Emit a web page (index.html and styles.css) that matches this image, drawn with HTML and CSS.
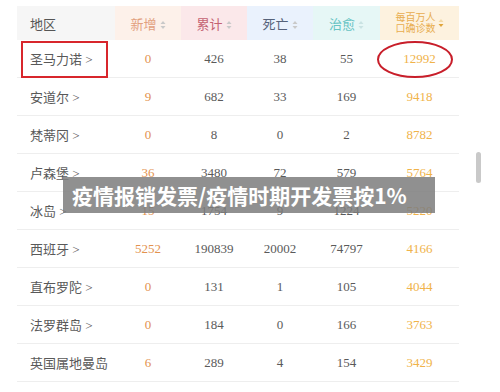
FILE: index.html
```html
<!DOCTYPE html>
<html lang="zh-CN">
<head>
<meta charset="utf-8">
<link rel="stylesheet" href="styles.css">
</head>
<body>
<div class="page">
  <table class="data">
    <colgroup>
      <col class="c-area"><col class="c-num"><col class="c-num"><col class="c-num"><col class="c-num2"><col class="c-last">
    </colgroup>
    <thead>
      <tr>
        <th class="h-area">地区</th>
        <th class="h-new">新增<svg class="sort" width="6" height="10" viewBox="0 0 6 10"><path d="M3 1 L5.5 4 L0.5 4Z" fill="#c9c9c9"/><path d="M3 9 L5.5 6 L0.5 6Z" fill="#c9c9c9"/></svg></th>
        <th class="h-total">累计<svg class="sort" width="6" height="10" viewBox="0 0 6 10"><path d="M3 1 L5.5 4 L0.5 4Z" fill="#c9c9c9"/><path d="M3 9 L5.5 6 L0.5 6Z" fill="#c9c9c9"/></svg></th>
        <th class="h-dead">死亡<svg class="sort" width="6" height="10" viewBox="0 0 6 10"><path d="M3 1 L5.5 4 L0.5 4Z" fill="#c9c9c9"/><path d="M3 9 L5.5 6 L0.5 6Z" fill="#c9c9c9"/></svg></th>
        <th class="h-cure">治愈<svg class="sort" width="6" height="10" viewBox="0 0 6 10"><path d="M3 1 L5.5 4 L0.5 4Z" fill="#c9e3e3"/><path d="M3 9 L5.5 6 L0.5 6Z" fill="#c9e3e3"/></svg></th>
        <th class="h-last"><span class="two">每百万人<br>口确诊数</span><svg class="sort" width="6" height="10" viewBox="0 0 6 10"><path d="M3 1 L5.5 4 L0.5 4Z" fill="#f3d9a6"/><path d="M3 9 L5.5 6 L0.5 6Z" fill="#e0a53a"/></svg></th>
      </tr>
    </thead>
    <tbody>
      <tr><td class="area"><span class="mark-box"></span>圣马力诺 &gt;</td><td class="new">0</td><td>426</td><td>38</td><td>55</td><td class="last"><svg class="mark-ring" width="80" height="40" viewBox="0 0 80 40"><ellipse cx="38" cy="19.5" rx="37" ry="17.5" fill="none" stroke="#c81e2a" stroke-width="2"/></svg>12992</td></tr>
      <tr><td class="area">安道尔 &gt;</td><td class="new">9</td><td>682</td><td>33</td><td>169</td><td class="last">9418</td></tr>
      <tr><td class="area">梵蒂冈 &gt;</td><td class="new">0</td><td>8</td><td>0</td><td>2</td><td class="last">8782</td></tr>
      <tr><td class="area">卢森堡 &gt;</td><td class="new">36</td><td>3480</td><td>72</td><td>579</td><td class="last">5764</td></tr>
      <tr><td class="area">冰岛 &gt;</td><td class="new">15</td><td>1754</td><td>9</td><td>1224</td><td class="last">5220</td></tr>
      <tr><td class="area">西班牙 &gt;</td><td class="new">5252</td><td>190839</td><td>20002</td><td>74797</td><td class="last">4166</td></tr>
      <tr><td class="area">直布罗陀 &gt;</td><td class="new">0</td><td>131</td><td>1</td><td>105</td><td class="last">4044</td></tr>
      <tr><td class="area">法罗群岛 &gt;</td><td class="new">0</td><td>184</td><td>0</td><td>166</td><td class="last">3763</td></tr>
      <tr><td class="area">英国属地曼岛</td><td class="new">6</td><td>289</td><td>4</td><td>154</td><td class="last">3429</td></tr>
    </tbody>
  </table>
  <div class="scrollbar"></div>
  <div class="banner">疫情报销发票/疫情时期开发票按1%</div>
</div>
</body>
</html>
```
FILE: styles.css
```css
html, body {
  margin: 0;
  padding: 0;
  background: #ffffff;
}
.page {
  position: relative;
  width: 500px;
  height: 392px;
  overflow: hidden;
  padding: 6px 0 0 17px;
  box-sizing: border-box;
  font-family: "Liberation Serif", "Noto Sans CJK SC", serif;
}
.data {
  border-collapse: collapse;
  table-layout: fixed;
  width: 442px;
}
.c-area { width: 98px; }
.c-num { width: 66px; }
.c-num2 { width: 67px; }
.c-last { width: 79px; }
th {
  height: 34px;
  padding: 0;
  font-weight: normal;
  font-size: 13px;
  text-align: center;
  white-space: nowrap;
}
th .sort {
  margin-left: 3px;
  vertical-align: -1px;
}
.h-area { background: #f6f6f6; color: #555; text-align: left; padding-left: 13px; }
.h-new { background: #fdf1ea; color: #e2a07e; }
.h-total { background: #fbe8ea; color: #c46272; }
.h-dead { background: #eaf2fd; color: #56627a; }
.h-cure { background: #e6f7f6; color: #66c4c4; }
.h-last { background: #fdf2df; color: #e8ad4f; }
.h-last .two {
  display: inline-block;
  font-size: 10px;
  line-height: 11px;
  vertical-align: middle;
}
.h-last .sort { vertical-align: middle; margin-left: 2px; }
td {
  height: 37px;
  padding: 0;
  border-bottom: 1px solid #eeeeee;
  text-align: center;
  font-size: 13px;
  color: #5a5a5a;
  position: relative;
  white-space: nowrap;
}
td.area {
  text-align: left;
  padding-left: 13px;
  color: #595959;
}
td.new { color: #e3924f; }
td.last { color: #f0b34a; }
.mark-box {
  position: absolute;
  left: 4px;
  top: 1px;
  width: 83px;
  height: 33px;
  border: 2px solid #d8262c;
}
.mark-ring {
  position: absolute;
  left: -3px;
  top: 0;
}
.scrollbar {
  position: absolute;
  left: 476px;
  top: 152px;
  width: 5px;
  height: 31px;
  border-radius: 3px;
  background: #c9c9c9;
}
.banner {
  position: absolute;
  left: 63px;
  top: 177px;
  width: 372px;
  height: 36px;
  box-sizing: border-box;
  padding-left: 9px;
  background: rgba(125, 125, 125, 0.85);
  color: #ffffff;
  font-family: "Noto Sans CJK SC", sans-serif;
  font-weight: bold;
  font-size: 21px;
  line-height: 36px;
  white-space: nowrap;
}
```
